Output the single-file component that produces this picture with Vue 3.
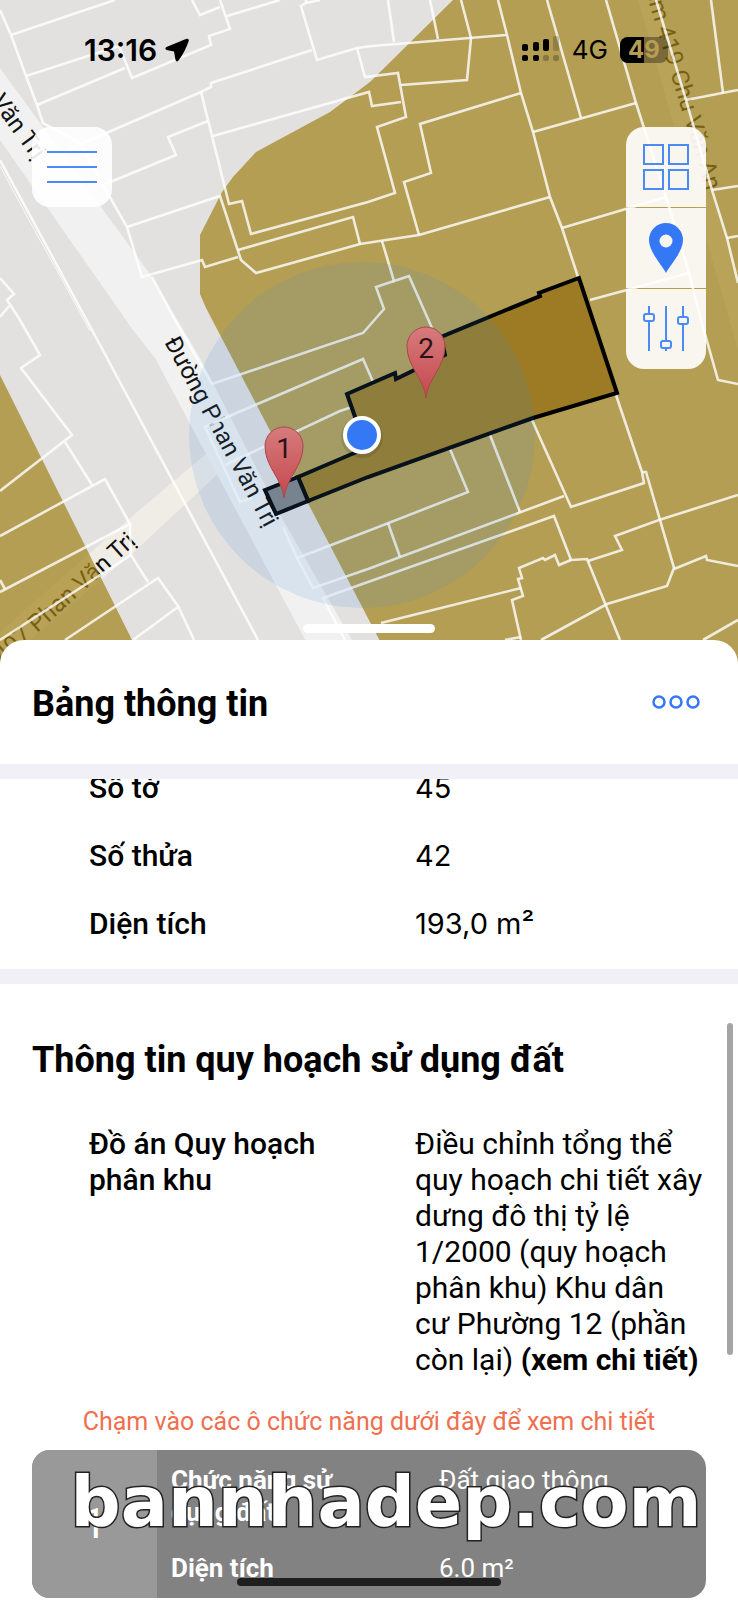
<script setup>
import { ref } from "vue"

const battery = ref(49);

// thông tin thửa đất
const parcelRows = ref([
  { label: "Số tờ", value: "45" },
  { label: "Số thửa", value: "42" },
  { label: "Diện tích", value: "193,0 m²" },
]);

const plan = {
  label: "Đồ án Quy hoạch phân khu",
  value: "Điều chỉnh tổng thể quy hoạch chi tiết xây dưng đô thị tỷ lệ 1/2000 (quy hoạch phân khu) Khu dân cư Phường 12 (phần còn lại)",
};

const zones = ref([
  { no: 1, use: "Đất giao thông", area: "6.0 m²" },
]);

const pins = [
  { no: 1, x: 284, y: 498 },
  { no: 2, x: 426, y: 398 },
];

// ranh thửa
const lots = [
  "0,10 11,35 26,76 37,105 43,123 80,143 103,185 127,227 142,277 202,260 205,267 238,257",
  "11,35 115,0",
  "26,76 119,46 132,78 211,45 209,36 230,29 220,0",
  "37,105 125,68",
  "192,0 200,15 220,7",
  "227,16 280,0",
  "320,0 306,3 301,6 317,60 357,48 372,46 506,35",
  "306,0 306,3",
  "357,48 365,77 398,73 406,117 377,127 395,193 368,202 251,234 242,201 229,204 201,92",
  "312,50 211,83 211,87 201,92 67,150",
  "208,121 168,137 176,155 103,185",
  "213,136 369,92 372,106 401,102",
  "127,227 220,196 241,260 256,273 360,244 419,235 550,197",
  "238,250 353,217 360,244",
  "388,0 394,42",
  "430,0 438,39",
  "461,0 471,38 467,80 401,85",
  "419,235 404,182 431,173 420,124 521,93",
  "498,0 507,35 521,93 533,132 550,197 562,228 578,277",
  "547,0 581,118",
  "533,132 636,103",
  "606,0 636,103 666,197 689,273 701,320 718,380 738,384",
  "562,228 666,197",
  "590,300 689,273",
  "656,0 686,100 712,190 727,238 738,283",
  "711,0 723,93",
  "686,100 738,90",
  "712,190 738,186",
  "727,238 738,236",
  "382,241 394,281 409,276 432,328",
  "394,281 376,287 384,309 363,333 212,384 198,360 175,320 152,277",
  "374,384 363,359 213,423",
  "352,407 340,411 225,465",
  "232,415 205,427 240,502 252,498",
  "0,160 92,330 258,640",
  "0,278 14,294 7,300 20,320 40,355 21,368 72,435 0,491",
  "0,317 9,306",
  "65,442 92,485",
  "0,536 105,479 130,524 0,592",
  "0,580 5,589",
  "130,524 131,555 148,582",
  "0,640 131,555",
  "65,640 158,578 178,606 194,640",
  "133,640 178,607",
  "283,527 297,558 368,531 468,492 450,449",
  "297,558 313,588 368,569 564,496",
  "345,640 323,598 368,582 554,516 571,560 587,559 620,640",
  "388,523 400,557",
  "490,435 520,512",
  "532,420 571,507 644,483 642,472 616,395",
  "642,472 646,472 674,568 667,586 607,604 541,640",
  "738,495 659,520 615,536 622,550 588,561",
  "571,560 559,565 555,555 545,560 543,558 519,568 522,578 518,579 523,596 512,600 521,640",
  "521,588 381,623",
  "738,566 707,560 706,556 674,569",
  "703,640 738,620",
  "505,640 521,637",
];
</script>

<template>
  <div class="page">
    <div class="map">
      <svg class="map-canvas" viewBox="0 0 738 664">
        <rect width="738" height="664" fill="#e2e1e0" />

        <!-- đường -->
        <polygon fill="#f0ede7" points="207,453 222,470 133,553 30,640 0,664 0,632 130,518" />
        <polygon fill="#f1f1f1" points="0,68 152,277 200,358 283,520 352,640 364,664 318,664 155,358 133,330 0,140" />
        <polygon fill="#f1f1f1" points="638,0 658,0 738,283 738,350" />

        <g class="street">
          <text transform="translate(164 342) rotate(61.6)">Đường Phan Văn Trị</text>
          <text transform="translate(34 161) rotate(54)" text-anchor="end">Phan Văn Trị</text>
          <text transform="translate(137 543) rotate(-42)" text-anchor="end">407 Phan Văn Trị</text>
          <text transform="translate(640 -26) rotate(73)">Hẻm 419 Chu Văn An</text>
        </g>

        <!-- vùng quy hoạch -->
        <g fill="#a18118" fill-opacity="0.7">
          <polygon points="453,0 370,82 330,112 256,152 233,177 222,192 200,235 200,294 206,308 370,622 392,664 738,664 738,0" />
          <polygon points="0,375 132,640 144,664 0,664" />
        </g>

        <g class="lots">
          <polyline v-for="(points, i) in lots" :key="i" :points="points" />
          <polyline class="thin" points="0,166 30,222 60,276 90,331" />
        </g>

        <!-- thửa đang chọn -->
        <g class="selected">
          <polygon fill="#9c7b24" points="298,477 366,448 347,394 395,373 396,379 445,355 441,337 540,296 539,293 579,278 617,393 533,418 368,477 308,501" />
          <polygon fill="#808486" points="265,490 298,477 308,501 276,514" />
        </g>

        <circle cx="362" cy="435" r="173" fill="#3c8ad8" fill-opacity="0.13" />

        <g v-for="pin in pins" :key="pin.no" :transform="`translate(${pin.x} ${pin.y})`">
          <path class="pin" d="M0 0C-2 -20 -19 -31 -19 -52A19 19 0 0 1 19 -52C19 -31 2 -20 0 0Z" />
          <text class="pin-no" y="-40" text-anchor="middle">{{ pin.no }}</text>
        </g>

        <!-- vị trí hiện tại -->
        <circle cx="362" cy="437" r="21" fill="#000" fill-opacity="0.1" />
        <circle cx="362" cy="435" r="17" fill="#3478f6" stroke="#fff" stroke-width="4" />

        <defs>
          <linearGradient id="pinFill" x1="0" y1="0" x2="0" y2="1">
            <stop offset="0" stop-color="#d67b7d" />
            <stop offset="1" stop-color="#c5484d" />
          </linearGradient>
        </defs>
      </svg>

      <div class="status">
        <span class="clock">13:16</span>
        <svg class="arrow" width="24" height="24" viewBox="0 0 24 24">
          <path d="M21.500 .8 1.500 9Q-.8 10.500 1.500 12L9 13.500 10.500 22Q11.500 24.500 13.500 22.500Q20 14 23.700 3Q24.200 .2 21.500 .8Z" />
        </svg>
        <svg class="signal" width="38" height="24" viewBox="0 0 38 24">
          <rect x="0" y="6" width="6" height="7" rx="2" />
          <rect x="11" y="4" width="6" height="9" rx="2" />
          <rect x="21" y="1" width="6" height="12" rx="2" />
          <rect x="31" y="-2" width="6" height="15" rx="2" opacity="0.2" />
          <rect x="0" y="17" width="6" height="6" rx="2" />
          <rect x="11" y="17" width="6" height="6" rx="2" />
          <rect x="21" y="17" width="6" height="6" rx="2" opacity="0.25" />
          <rect x="31" y="17" width="6" height="6" rx="2" opacity="0.25" />
        </svg>
        <span class="network">4G</span>
        <span class="battery">
          <span class="level" :style="{ width: battery + '%' }"></span>
          <span class="percent">{{ battery }}</span>
        </span>
      </div>

      <button class="tool menu" aria-label="Menu">
        <svg width="50" height="34" viewBox="0 0 50 34">
          <path d="M0 2H50M0 17H50M0 32H50" />
        </svg>
      </button>

      <div class="tools">
        <button class="tool" aria-label="Lớp bản đồ">
          <svg width="48" height="48" viewBox="0 0 48 48">
            <path d="M2 2H21V21H2ZM27 2H46V21H27ZM2 27H21V46H2ZM27 27H46V46H27Z" />
          </svg>
        </button>
        <button class="tool" aria-label="Vị trí">
          <svg width="34" height="50" viewBox="0 0 34 50">
            <path class="solid" fill-rule="evenodd" d="M17 50C13 42 0 29 0 17A17 17 0 0 1 34 17C34 29 21 42 17 50ZM17 11.500A6.500 6.500 0 1 0 17 24.500 6.500 6.500 0 0 0 17 11.500Z" />
          </svg>
        </button>
        <button class="tool" aria-label="Bộ lọc">
          <svg width="46" height="46" viewBox="0 0 46 46">
            <path d="M6 0V8M6 15V45M23 0V35M23 42V45M40 0V11M40 18V45" />
            <rect x="1" y="8" width="10" height="7" rx="2" />
            <rect x="18" y="35" width="10" height="7" rx="2" />
            <rect x="35" y="11" width="10" height="7" rx="2" />
          </svg>
        </button>
      </div>

      <div class="grabber"></div>
    </div>

    <main class="sheet">
      <header class="sheet-head">
        <h1>Bảng thông tin</h1>
        <button class="more" aria-label="Thêm">
          <svg width="50" height="16" viewBox="0 0 50 16">
            <circle cx="8" cy="8" r="5.500" />
            <circle cx="25" cy="8" r="5.500" />
            <circle cx="42" cy="8" r="5.500" />
          </svg>
        </button>
      </header>

      <div class="scroll">
        <dl class="parcel">
          <div v-for="row in parcelRows" :key="row.label" class="row">
            <dt>{{ row.label }}</dt>
            <dd class="number">{{ row.value }}</dd>
          </div>
        </dl>

        <section class="planning">
          <h2>Thông tin quy hoạch sử dụng đất</h2>
          <dl>
            <div class="row">
              <dt>{{ plan.label }}</dt>
              <dd>{{ plan.value }} <a href="#">(xem chi tiết)</a></dd>
            </div>
          </dl>
          <p class="hint">Chạm vào các ô chức năng dưới đây để xem chi tiết</p>

          <button v-for="zone in zones" :key="zone.no" class="zone">
            <span class="zone-no">{{ zone.no }}</span>
            <span class="zone-info">
              <span class="key">Chức năng sử dụng đất</span>
              <span>{{ zone.use }}</span>
              <span class="key">Diện tích</span>
              <span>{{ zone.area }}</span>
            </span>
          </button>
        </section>
        <div class="scrollbar"></div>
      </div>
    </main>

    <div class="watermark">bannhadep.com</div>
    <div class="home-bar"></div>
  </div>
</template>

<style>
body {
  margin: 0;
  background: #fff;
}
</style>

<style scoped>
.page {
  position: relative;
  min-height: 100vh;
  overflow: hidden;
  font-family: Roboto, "Noto Sans", sans-serif;
  font-size: 30px;
  line-height: 36px;
  color: #000;
}

button {
  border: 0;
  padding: 0;
  font: inherit;
  cursor: pointer;
}

h1,
h2 {
  margin: 0;
  font-size: 36px;
  line-height: 44px;
  font-weight: 700;
}

/* bản đồ */
.map {
  position: relative;
}

.map-canvas {
  display: block;
  width: 100%;
  height: auto;
}

.street {
  font-size: 24px;
  fill: #111;
}

.lots polyline {
  fill: none;
  stroke: #fff;
  stroke-opacity: 0.8;
  stroke-width: 2.600;
}

.lots .thin {
  stroke-width: 1;
}

.selected polygon {
  stroke: #000;
  stroke-width: 4;
}

.pin {
  fill: url(#pinFill);
  stroke: #a9474b;
  stroke-width: 1;
}

.pin-no {
  font-size: 28px;
  fill: #2a1415;
}

/* thanh trạng thái */
.status {
  position: absolute;
  top: 32px;
  left: 0;
  right: 0;
  display: flex;
  align-items: center;
  padding: 0 70px 0 84px;
  font-family: Inter, "Liberation Sans", sans-serif;
}

.clock {
  font-weight: 600;
}

.arrow {
  margin-left: 8px;
}

.signal {
  margin-left: auto;
  overflow: visible;
}

.network {
  margin-left: 12px;
  font-size: 26px;
  font-weight: 400;
}

.battery {
  position: relative;
  display: flex;
  justify-content: center;
  width: 48px;
  height: 26px;
  margin-left: 12px;
  border-radius: 8px;
  overflow: hidden;
  background: rgba(0, 0, 0, 0.35);
}

.level {
  position: absolute;
  top: 0;
  bottom: 0;
  left: 0;
  background: #000;
}

.percent {
  position: relative;
  font-size: 24px;
  line-height: 26px;
  font-weight: 700;
  color: #b59e54;
}

/* nút trên bản đồ */
.tool {
  display: flex;
  align-items: center;
  justify-content: center;
  width: 80px;
  height: 80px;
  background: rgba(255, 255, 255, 0.9);
}

.tool svg {
  fill: none;
  stroke: #4a8bf7;
  stroke-width: 2;
}

.tool .solid {
  fill: #3478f6;
  stroke: none;
}

.menu {
  position: absolute;
  top: 127px;
  left: 32px;
  border-radius: 18px;
}

.tools {
  position: absolute;
  top: 127px;
  right: 32px;
  display: grid;
  gap: 1px;
  border-radius: 18px;
  overflow: hidden;
}

.grabber {
  position: absolute;
  bottom: 31px;
  left: calc(50% - 66px);
  width: 132px;
  height: 9px;
  border-radius: 5px;
  background: #fff;
}

/* bảng thông tin */
.sheet {
  position: relative;
  margin-top: -24px;
  border-radius: 24px 24px 0 0;
  background: #fff;
}

.sheet-head {
  display: flex;
  align-items: flex-start;
  justify-content: space-between;
  padding: 42px 37px 38px 32px;
  border-bottom: 15px solid #f0f0f6;
}

.more {
  display: flex;
  align-items: center;
  height: 40px;
  background: none;
}

.more svg {
  fill: none;
  stroke: #3478f6;
  stroke-width: 2.500;
}

.scroll {
  position: relative;
  overflow: hidden;
}

dl,
dd,
.hint {
  margin: 0;
}

.row {
  display: grid;
  grid-template-columns: 294fr 289fr;
  column-gap: 32px;
  padding: 16px 34px 16px 89px;
}

dt {
  font-weight: 500;
}

.number {
  font-family: Inter, Roboto, sans-serif;
  font-size: 29px;
}

/* danh sách đã cuộn lên một phần */
.parcel {
  margin-top: -25px;
  padding-bottom: 11px;
  border-bottom: 15px solid #f0f0f6;
}

.planning {
  padding-top: 54px;
}

.planning h2 {
  margin: 0 32px 28px;
}

.row a {
  font-weight: 700;
  color: inherit;
  text-decoration: none;
}

.hint {
  margin: 12px 32px;
  font-size: 25px;
  line-height: 32px;
  text-align: center;
  color: #ef6f4f;
}

.zone {
  display: flex;
  width: calc(100% - 64px);
  margin: 0 32px;
  border-radius: 18px;
  overflow: hidden;
  background: #828282;
  color: #fff;
  font-size: 26px;
  line-height: 32px;
  text-align: left;
}

.zone-no {
  display: flex;
  align-items: center;
  justify-content: center;
  align-self: stretch;
  width: 125px;
  background: #999;
  font-size: 42px;
}

.zone-info {
  flex: 1;
  display: grid;
  grid-template-columns: 212px 1fr;
  column-gap: 56px;
  row-gap: 24px;
  padding: 14px;
}

.key {
  font-weight: 700;
}

.scrollbar {
  position: absolute;
  top: 244px;
  right: 5px;
  width: 6px;
  height: 332px;
  border-radius: 3px;
  background: #a5a5a5;
}

.watermark {
  position: absolute;
  bottom: 58px;
  left: 0;
  right: 0;
  padding-left: 34px;
  font-family: "DejaVu Sans", sans-serif;
  font-size: 70px;
  line-height: 80px;
  font-weight: 700;
  text-align: center;
  color: #fff;
  -webkit-text-stroke: 3px #222;
  paint-order: stroke fill;
  pointer-events: none;
}

.home-bar {
  position: absolute;
  bottom: 14px;
  left: calc(50% - 132px);
  width: 264px;
  height: 8px;
  border-radius: 4px;
  background: #1f1f1f;
}
</style>
